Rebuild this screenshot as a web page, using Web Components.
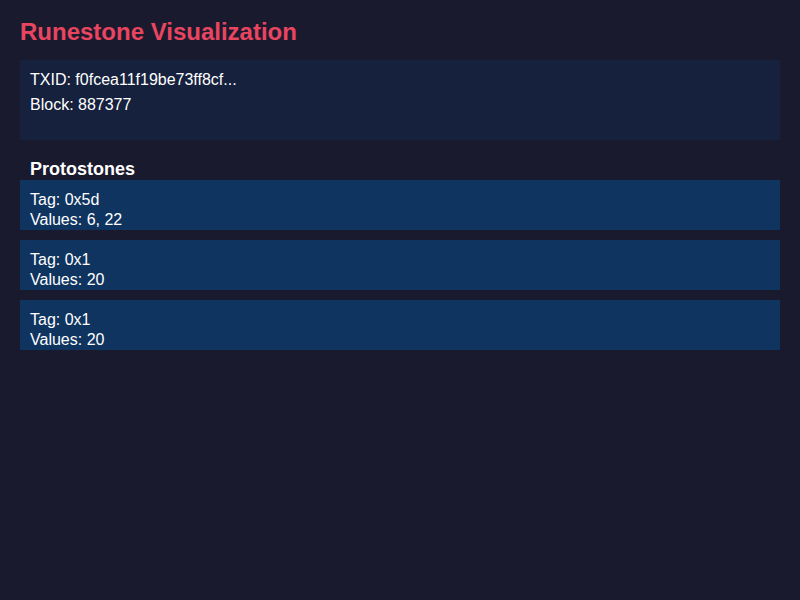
<!DOCTYPE html>
<html lang="en">
<head>
<meta charset="utf-8">
<title>Runestone Visualization</title>
<style>
body { margin: 0; background: #1a1a2e; color: #fff; font-family: "Liberation Sans", Arial, sans-serif; font-size: 16px; }
</style>
</head>
<body>
<runestone-page>
  <span slot="title">Runestone Visualization</span>
  <transaction-panel txid="f0fcea11f19be73ff8cf..." block="887377"></transaction-panel>
  <protostone-list heading="Protostones">
    <protostone-card tag="0x5d" values="6, 22"></protostone-card>
    <protostone-card tag="0x1" values="20"></protostone-card>
    <protostone-card tag="0x1" values="20"></protostone-card>
  </protostone-list>
</runestone-page>
<script>
class RunestonePage extends HTMLElement {
  constructor() {
    super();
    this.attachShadow({ mode: "open" }).innerHTML = `
      <style>
        :host { display: block; padding: 16px 20px 20px; }
        h1 { margin: 0 0 12px; font-size: 24px; line-height: 32px; color: #e94560; }
        main { display: flex; flex-direction: column; gap: 18px; }
      </style>
      <h1><slot name="title"></slot></h1>
      <main><slot></slot></main>`;
  }
}
class TransactionPanel extends HTMLElement {
  constructor() {
    super();
    this.attachShadow({ mode: "open" }).innerHTML = `
      <style>
        :host { display: block; box-sizing: border-box; min-height: 80px; padding: 7px 10px; background: #16213e; }
        p { margin: 0; line-height: 25px; }
      </style>
      <p id="txid"></p>
      <p id="block"></p>`;
  }
  connectedCallback() {
    this.shadowRoot.getElementById("txid").textContent = `TXID: ${this.getAttribute("txid")}`;
    this.shadowRoot.getElementById("block").textContent = `Block: ${this.getAttribute("block")}`;
  }
}
class ProtostoneList extends HTMLElement {
  constructor() {
    super();
    this.attachShadow({ mode: "open" }).innerHTML = `
      <style>
        :host { display: block; }
        h2 { margin: 0; padding: 0 10px; font-size: 18px; line-height: 22px; }
        div { display: flex; flex-direction: column; gap: 10px; }
      </style>
      <h2></h2>
      <div><slot></slot></div>`;
  }
  connectedCallback() {
    this.shadowRoot.querySelector("h2").textContent = this.getAttribute("heading");
  }
}
class ProtostoneCard extends HTMLElement {
  constructor() {
    super();
    this.attachShadow({ mode: "open" }).innerHTML = `
      <style>
        :host { display: block; padding: 10px 10px 0; background: #0f3460; }
        p { margin: 0; line-height: 20px; }
      </style>
      <p id="tag"></p>
      <p id="values"></p>`;
  }
  connectedCallback() {
    this.shadowRoot.getElementById("tag").textContent = `Tag: ${this.getAttribute("tag")}`;
    this.shadowRoot.getElementById("values").textContent = `Values: ${this.getAttribute("values")}`;
  }
}
customElements.define("runestone-page", RunestonePage);
customElements.define("transaction-panel", TransactionPanel);
customElements.define("protostone-list", ProtostoneList);
customElements.define("protostone-card", ProtostoneCard);
</script>
</body>
</html>
